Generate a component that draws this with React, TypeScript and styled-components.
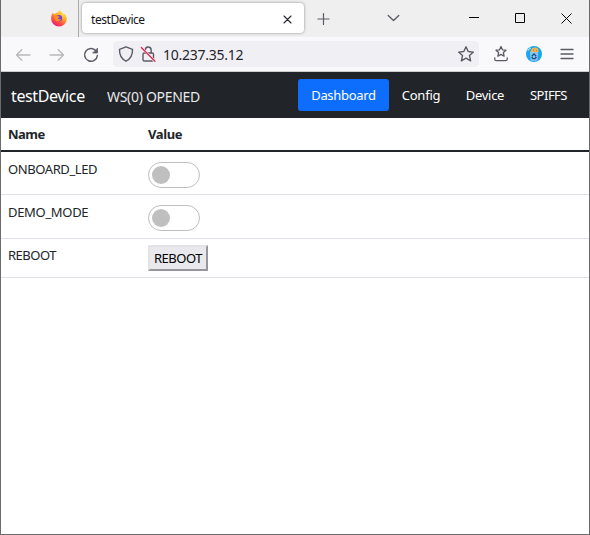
import React from 'react';
import styled, { createGlobalStyle } from 'styled-components';

const GlobalStyle = createGlobalStyle`
  *, *::before, *::after { box-sizing: border-box; }
  body { margin: 0; background: #fff; font-family: "Noto Sans", "Open Sans", sans-serif; }
  svg { display: block; flex: none; }
`;

const BrowserWindow = styled.div`
  width: 590px;
  height: 535px;
  display: flex;
  flex-direction: column;
  border: 1px solid #6b6b6e;
  border-top: 0;
  background: #fff;
  overflow: hidden;
`;

const TabStrip = styled.div`
  height: 37px;
  flex: none;
  display: flex;
  background: #efefef;
`;

const PinnedTab = styled.div`
  width: 78px;
  height: 37px;
  flex: none;
  padding: 10px 0 0 49px;
  border-right: 1px solid #a9a9aa;
`;

const ActiveTab = styled.div`
  width: 222px;
  height: 30px;
  flex: none;
  margin: 3px 0 0 3px;
  padding: 2px 12px 0 9px;
  display: flex;
  align-items: center;
  justify-content: space-between;
  border-radius: 4px;
  background: #fff;
  box-shadow: 0 0 3px rgba(0, 0, 0, 0.42);
`;

const Label = styled.span<{ $size: number; $spacing?: number; $color?: string; $weight?: number }>`
  font-size: ${p => p.$size}px;
  line-height: 18px;
  letter-spacing: ${p => p.$spacing ?? 0}px;
  color: ${p => p.$color ?? '#212529'};
  font-weight: ${p => p.$weight ?? 400};
  white-space: nowrap;
`;

const TabTitle = styled(Label)`
  padding-top: 1px;
`;

const StripButton = styled.div<{ $width: number }>`
  width: ${p => p.$width}px;
  height: 36px;
  flex: none;
  display: flex;
  align-items: center;
  justify-content: center;
`;

const TabListButton = styled(StripButton)`
  padding-right: 7px;
`;

const WindowControls = styled.div`
  display: flex;
  flex: none;
  margin-left: auto;
`;

const Toolbar = styled.div`
  height: 35px;
  flex: none;
  display: flex;
  align-items: center;
  padding-left: 13px;
  background: #f9f9fb;
  border-bottom: 1px solid #ccccce;
`;

const NavIcons = styled.div`
  width: 99px;
  display: flex;
  gap: 16px;
  padding-top: 1px;
`;

const ReloadButton = styled.div`
  padding-left: 1px;
`;

const AddressBar = styled.div`
  width: 366px;
  height: 26px;
  display: flex;
  align-items: center;
  padding: 0 4px 0 4px;
  border-radius: 4px;
  background: #f0f0f4;
`;

const Address = styled(Label)`
  padding-top: 2px;
`;

const SiteIcons = styled.div`
  width: 46px;
  display: flex;
  gap: 4px;
`;

const AddressEnd = styled.div`
  margin-left: auto;
`;

const ToolbarActions = styled.div`
  display: flex;
  gap: 15px;
  margin-left: 13px;
`;

const AppNav = styled.nav`
  height: 46px;
  flex: none;
  display: flex;
  align-items: center;
  padding: 3px 9px 0 10px;
  background: #212529;
`;

const Brand = styled.div`
  width: 96px;
  padding-bottom: 1px;
`;

const NavLinks = styled.div`
  display: flex;
  margin-left: auto;
  margin-top: -4px;
`;

const NavLink = styled.a<{ $width: number; $active?: boolean }>`
  width: ${p => p.$width}px;
  height: 32px;
  display: flex;
  align-items: center;
  justify-content: center;
  border-radius: 3px;
  background: ${p => (p.$active ? '#0d6efd' : 'transparent')};
`;

const Table = styled.div`
  display: flex;
  flex-direction: column;
`;

const HeaderRow = styled.div`
  height: 34px;
  display: grid;
  grid-template-columns: 140px 1fr;
  padding: 7px 7px 0;
  border-bottom: 2px solid #212529;
`;

const Row = styled.div<{ $height: number; $top: number }>`
  height: ${p => p.$height}px;
  display: grid;
  grid-template-columns: 140px 1fr;
  align-items: start;
  padding: ${p => p.$top}px 7px 0;
  border-bottom: 1px solid #dee2e6;
`;

const Switch = styled.div`
  width: 52px;
  height: 26px;
  margin-top: 2px;
  padding: 3px;
  border: 1px solid #bfbfbf;
  border-radius: 13px;
  background: #fff;
`;

const Knob = styled.div`
  width: 18px;
  height: 18px;
  border-radius: 50%;
  background: #bfbfbf;
`;

const RebootButton = styled.button`
  width: 60px;
  height: 26px;
  margin-top: -1px;
  padding: 0;
  display: flex;
  align-items: center;
  justify-content: center;
  border: 2px solid;
  border-color: #e3e3e6 #97979b #97979b #e3e3e6;
  background: #e9e9ed;
  font-family: inherit;
`;

const stroke = { fill: 'none', stroke: '#5b5b66', strokeWidth: 1.3, strokeLinecap: 'round', strokeLinejoin: 'round' } as const;

const Firefox = () => (
  <svg width="18" height="17" viewBox="0 0 18 17">
    <defs>
      <linearGradient id="fox" x1="0.8" y1="0.05" x2="0.25" y2="1">
        <stop offset="0" stopColor="#fff04a" />
        <stop offset="0.4" stopColor="#ffa52c" />
        <stop offset="0.7" stopColor="#ff4b3e" />
        <stop offset="1" stopColor="#e31587" />
      </linearGradient>
    </defs>
    <path d="M2.8 2.8C3.2 3.8 4 4 5 4C6 2.5 7.5 2.4 8 2.5C8.4 1.2 9 .5 10 0C10.8 2 13 2.4 13.7 4.7L14.5 3.8C16 5.2 16.9 7 16.8 9A7.8 7.5 0 0 1 1.2 9C1 6.4 1.7 4.3 2.8 2.8Z" fill="url(#fox)" />
    <circle cx="9" cy="8.2" r="3.2" fill="#7143d9" />
    <path d="M5.2 6.1C6.3 5.3 7.5 5.5 8.4 6.3C9.3 6.4 9.9 6.8 9.7 7.2C9 7.8 8 7.5 8 8.6C8.8 9.6 10 9.3 11.1 9C10.7 11.5 7 12.6 5 10C3.9 8.7 4.3 7 5.2 6.1Z" fill="#ff8a28" />
    <path d="M9.6 4.1C12.5 4.3 13.6 7 12.4 9.6C14 8 14.2 5.1 12.6 3.8Z" fill="#ffd33b" />
  </svg>
);

const Arrow = ({ forward = false }: { forward?: boolean }) => (
  <svg width="18" height="16" viewBox="0 0 18 16" {...stroke} stroke="#b6b6bd">
    <path d={forward ? 'M2 8H15.5M10.2 2.8L15.5 8L10.2 13.2' : 'M16 8H2.5M7.8 2.8L2.5 8L7.8 13.2'} />
  </svg>
);

const Reload = () => (
  <svg width="16" height="16" viewBox="0 0 16 16" {...stroke}>
    <path d="M13.4 4.4A6.4 6.4 0 1 0 14.4 8.5" strokeWidth="1.5" />
    <path d="M14.5 1.5V6H10Z" fill="#5b5b66" strokeWidth=".8" />
  </svg>
);

const Shield = () => (
  <svg width="18" height="18" viewBox="0 0 18 18" {...stroke} strokeWidth="1.4">
    <path d="M9 1.8L15.5 4.3C15.7 9 13.5 14 9 16.2C4.5 14 2.3 9 2.5 4.3Z" />
  </svg>
);

const BrokenLock = () => (
  <svg width="18" height="18" viewBox="0 0 18 18" {...stroke} strokeWidth="1.4">
    <rect x="4" y="8" width="10.5" height="8" rx="1.3" />
    <path d="M6.2 8V5.2A3 3.2 0 0 1 12.2 5.2V8" />
    <path d="M2.3 2.5L16 16.3" stroke="#f0f0f4" strokeWidth="2.4" />
    <path d="M2.3 2.5L16 16.3" stroke="#e22850" strokeWidth="1.3" />
  </svg>
);

const Star = () => (
  <svg width="18" height="18" viewBox="0 0 18 18" {...stroke} strokeWidth="1.4">
    <path d="M9 1.8L11.2 6.5L16.4 7.1L12.5 10.6L13.6 15.8L9 13.2L4.4 15.8L5.5 10.6L1.6 7.1L6.8 6.5Z" />
  </svg>
);

const SavedStar = () => (
  <svg width="18" height="18" viewBox="0 0 18 18" {...stroke}>
    <path d="M9 1.5L10.5 4.8L14 5.2L11.4 7.6L12.1 11.2L9 9.4L5.9 11.2L6.6 7.6L4 5.2L7.5 4.8Z" />
    <path d="M2.8 12.8V14.2Q2.8 15.7 4.3 15.7H13.7Q15.2 15.7 15.2 14.2V12.8" />
  </svg>
);

const CookieBin = () => (
  <svg width="18" height="18" viewBox="0 0 18 18">
    <circle cx="9" cy="9" r="8" fill="#16a5ef" />
    <path d="M3 5.7Q4 3.5 6 2.9" stroke="#d4f3ff" fill="none" />
    <path d="M4.8 6.8H13.3L12.3 15.8H5.8Z" fill="#8fc4e8" />
    <path d="M5.6 6.9C5.6 3.5 8.3 2.2 10.7 2.6C13.2 3 14 5 13.2 6.9Z" fill="#efb34d" />
    <circle cx="8.7" cy="4.9" r=".5" fill="#99642e" />
    <circle cx="11.4" cy="5.4" r=".5" fill="#a8773c" />
    <path d="M6.8 11.2L9 8.9L11.2 11.2M11.4 12L10 13.7H8L6.6 12" stroke="#17488d" strokeWidth="1.3" fill="none" />
  </svg>
);

const navItems = [
  { name: 'Dashboard', width: 91, spacing: -0.3, active: true },
  { name: 'Config', width: 64, spacing: -0.2 },
  { name: 'Device', width: 64, spacing: -0.3 },
  { name: 'SPIFFS', width: 63, spacing: -0.5 },
];

export default function App() {
  return (
    <>
      <GlobalStyle />
      <BrowserWindow>
        <TabStrip>
          <PinnedTab><Firefox /></PinnedTab>
          <ActiveTab>
            <TabTitle $size={12} $spacing={-0.45} $color="#15141a">testDevice</TabTitle>
            <svg width="9" height="9" viewBox="0 0 9 9" {...stroke} stroke="#25242c" strokeWidth="1.1"><path d="M1 1L8 8M8 1L1 8" /></svg>
          </ActiveTab>
          <StripButton $width={38}>
            <svg width="13" height="13" viewBox="0 0 13 13" {...stroke} strokeWidth="1.2"><path d="M1 7H12M6.5 1.5V12.5" /></svg>
          </StripButton>
          <WindowControls>
            <TabListButton $width={108}>
              <svg width="13" height="9" viewBox="0 0 13 9" {...stroke}><path d="M1.2 1.5L6.5 6.5L11.8 1.5" /></svg>
            </TabListButton>
            <StripButton $width={46}>
              <svg width="10" height="11" viewBox="0 0 10 11"><path d="M0 4.5H10" stroke="#000" /></svg>
            </StripButton>
            <StripButton $width={46}>
              <svg width="10" height="10" viewBox="0 0 10 10"><path d="M.5 .5H9.5V9.5H.5Z" stroke="#000" fill="none" /></svg>
            </StripButton>
            <StripButton $width={46}>
              <svg width="11" height="11" viewBox="0 0 11 11"><path d="M.5 .5L10.5 10.5M10.5 .5L.5 10.5" stroke="#000" /></svg>
            </StripButton>
          </WindowControls>
        </TabStrip>
        <Toolbar>
          <NavIcons><Arrow /><Arrow forward /><ReloadButton><Reload /></ReloadButton></NavIcons>
          <AddressBar>
            <SiteIcons><Shield /><BrokenLock /></SiteIcons>
            <Address $size={14} $spacing={-0.25} $color="#25242c">10.237.35.12</Address>
            <AddressEnd><Star /></AddressEnd>
          </AddressBar>
          <ToolbarActions>
            <SavedStar />
            <CookieBin />
            <svg width="18" height="18" viewBox="0 0 18 18" {...stroke}><path d="M3 4.5H15M3 9H15M3 13.5H15" /></svg>
          </ToolbarActions>
        </Toolbar>
        <AppNav>
          <Brand><Label $size={16} $spacing={-0.38} $color="#fff">testDevice</Label></Brand>
          <Label $size={14} $spacing={-0.3} $color="#e8e9e9">WS(0) OPENED</Label>
          <NavLinks>
            {navItems.map(n => (
              <NavLink key={n.name} $width={n.width} $active={n.active}>
                <Label $size={13} $spacing={n.spacing} $color="#fff">{n.name}</Label>
              </NavLink>
            ))}
          </NavLinks>
        </AppNav>
        <Table>
          <HeaderRow>
            <Label $size={13} $spacing={-0.5} $weight={700}>Name</Label>
            <Label $size={13} $spacing={-0.4} $weight={700}>Value</Label>
          </HeaderRow>
          <Row $height={43} $top={8}>
            <Label $size={13} $spacing={-0.4}>ONBOARD_LED</Label>
            <Switch><Knob /></Switch>
          </Row>
          <Row $height={44} $top={8}>
            <Label $size={13} $spacing={-0.32}>DEMO_MODE</Label>
            <Switch><Knob /></Switch>
          </Row>
          <Row $height={39} $top={7}>
            <Label $size={13} $spacing={-0.5}>REBOOT</Label>
            <RebootButton><Label $size={13} $spacing={-0.5} $color="#000">REBOOT</Label></RebootButton>
          </Row>
        </Table>
      </BrowserWindow>
    </>
  );
}
